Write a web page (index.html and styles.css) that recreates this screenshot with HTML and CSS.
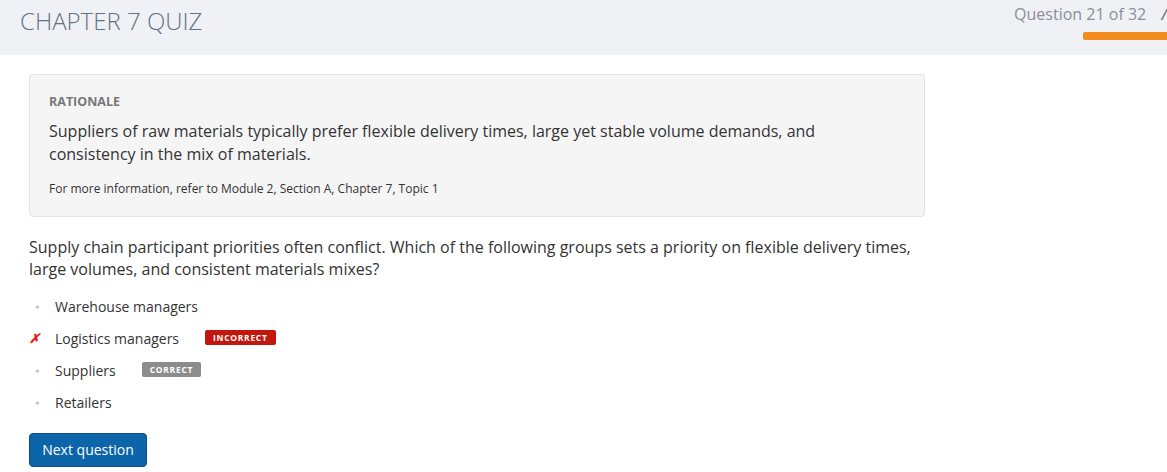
FILE: index.html
```html
<!DOCTYPE html>
<html>
<head>
<meta charset="utf-8">
<link rel="stylesheet" href="styles.css">
</head>
<body>
<header class="topbar">
  <h1 class="title">CHAPTER 7 QUIZ</h1>
  <div class="progress">
    <div class="progress-text">Question 21 of 32 <span class="cut">/</span></div>
    <div class="progress-bar"></div>
  </div>
</header>
<main class="content">
  <section class="rationale">
    <div class="rationale-label">RATIONALE</div>
    <p class="rationale-text">Suppliers of raw materials typically prefer flexible delivery times, large yet stable volume demands, and consistency in the mix of materials.</p>
    <p class="rationale-ref">For more information, refer to Module 2, Section A, Chapter 7, Topic 1</p>
  </section>
  <p class="question">Supply chain participant priorities often conflict. Which of the following groups sets a priority on flexible delivery times, large volumes, and consistent materials mixes?</p>
  <ul class="options">
    <li class="option"><span class="mark dot">&#10022;</span><span class="opt-text">Warehouse managers</span></li>
    <li class="option"><span class="mark cross">&#10007;</span><span class="opt-text">Logistics managers</span><span class="badge badge-incorrect">INCORRECT</span></li>
    <li class="option"><span class="mark dot">&#10022;</span><span class="opt-text">Suppliers</span><span class="badge badge-correct">CORRECT</span></li>
    <li class="option"><span class="mark dot">&#10022;</span><span class="opt-text">Retailers</span></li>
  </ul>
  <button class="next-btn">Next question</button>
</main>
</body>
</html>
```
FILE: styles.css
```css
html, body {
  margin: 0;
  padding: 0;
  background: #ffffff;
  font-family: "Open Sans", "Liberation Sans", sans-serif;
  color: #333333;
}
.topbar {
  height: 55px;
  background: #f0f1f5;
  display: flex;
  justify-content: space-between;
  align-items: flex-start;
  overflow: hidden;
}
.title {
  margin: 6px 0 0 20px;
  font-size: 24px;
  font-weight: 300;
  color: #637183;
  line-height: 30px;
}
.progress {
  display: flex;
  flex-direction: column;
  align-items: flex-end;
  margin-top: 3px;
  margin-right: 0;
}
.progress-text {
  font-size: 16px;
  color: #8a8e97;
  line-height: 22px;
  white-space: nowrap;
}
.cut {
  font-style: italic;
  color: #5f6670;
  margin-left: 11px;
}
.progress-bar {
  width: 84px;
  height: 8px;
  background: #f38c1d;
  margin-top: 7px;
  border-radius: 2px 0 0 2px;
}
.content {
  padding: 19px 0 0 29px;
  width: 896px;
}
.rationale {
  background: #f5f5f5;
  border: 1px solid #e3e3e3;
  border-radius: 4px;
  padding: 18px 19px 19px 19px;
}
.rationale-label {
  font-size: 12.5px;
  font-weight: 700;
  color: #777777;
  line-height: 17px;
}
.rationale-text {
  margin: 10px 0 0 0;
  font-size: 16px;
  line-height: 23px;
  color: #333333;
}
.rationale-ref {
  margin: 14px 0 0 0;
  font-size: 12px;
  line-height: 17px;
  color: #333333;
}
.question {
  margin: 19px 0 0 0;
  font-size: 16px;
  line-height: 22px;
  color: #333333;
}
.options {
  list-style: none;
  margin: 10px 0 0 0;
  padding: 0;
}
.option {
  display: flex;
  align-items: center;
  height: 32px;
  font-size: 14px;
}
.mark {
  width: 26px;
  display: inline-block;
}
.dot {
  color: #c4c4c4;
  font-size: 8px;
  padding-left: 5px;
  width: 21px;
}
.cross {
  color: #e0201b;
  font-size: 13px;
  font-weight: 700;
  font-style: italic;
}
.opt-text {
  color: #333333;
}
.badge {
  display: inline-block;
  font-size: 8.5px;
  font-weight: 700;
  letter-spacing: 0.7px;
  color: #ffffff;
  line-height: 15px;
  padding: 0 8px;
  border-radius: 2px;
  margin-left: 26px;
  margin-top: -2px;
}
.badge-incorrect {
  background: #c4160c;
}
.badge-correct {
  background: #8c8c8c;
}
.next-btn {
  margin-top: 15px;
  background: #0b65a8;
  border: 1px solid #0a4f86;
  color: #ffffff;
  font-family: "Open Sans", "Liberation Sans", sans-serif;
  font-size: 14px;
  line-height: 20px;
  padding: 6px 0;
  box-sizing: border-box;
  height: 34px;
  border-radius: 4px;
  width: 118px;
  text-align: center;
  white-space: nowrap;
}
```
